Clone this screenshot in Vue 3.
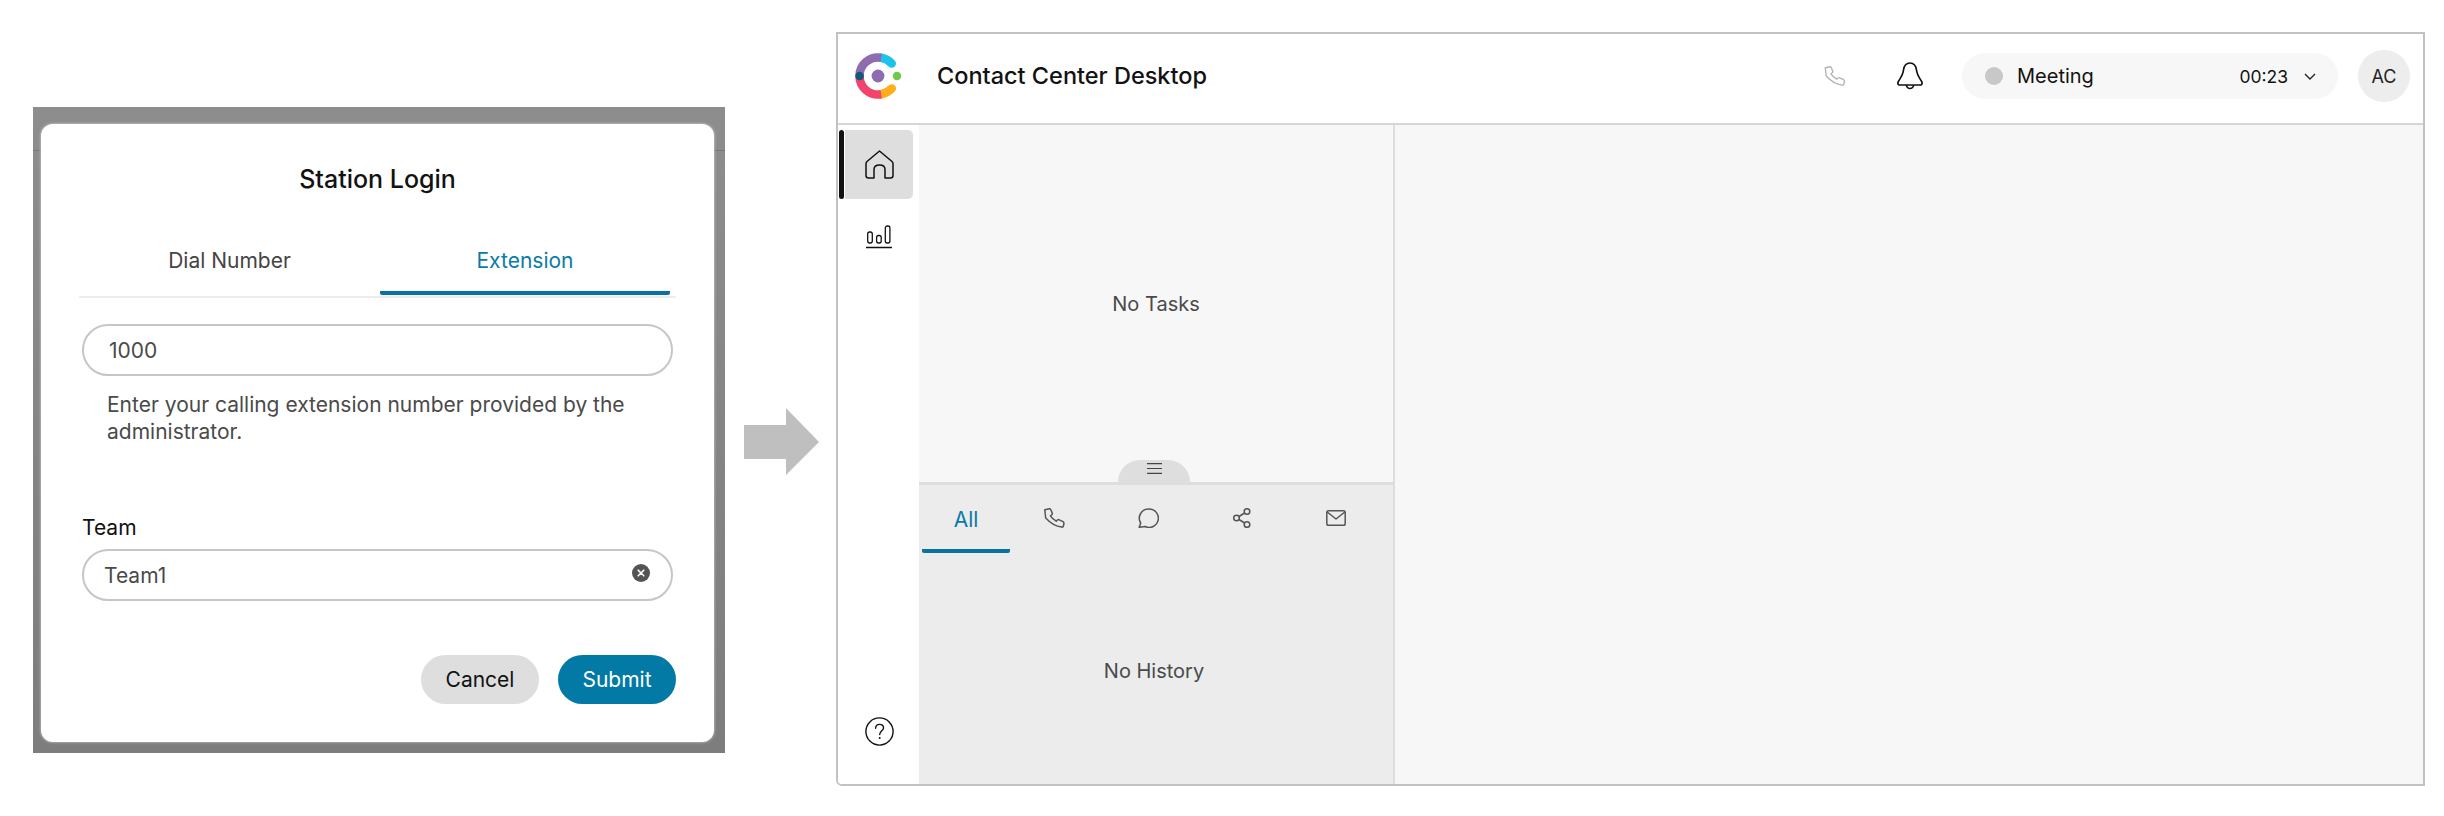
<template>
  <div class="page">
    <section class="backdrop">
      <div class="modal">
        <h2 class="modal-title">Station Login</h2>
        <div class="login-tabs">
          <div class="login-tab">Dial Number</div>
          <div class="login-tab active">Extension</div>
        </div>
        <input class="pill-input ext-input" value="1000" readonly />
        <p class="help">Enter your calling extension number provided by the administrator.</p>
        <label class="team-label">Team</label>
        <div class="team-field">
          <input class="pill-input team-input" value="Team1" readonly />
          <svg class="clear" width="18" height="18" viewBox="0 0 18 18">
            <circle cx="9" cy="9" r="9" fill="#545454" />
            <path d="M6.2 6.2l5.6 5.6M11.8 6.2l-5.6 5.6" stroke="#fff" stroke-width="1.6" stroke-linecap="round" />
          </svg>
        </div>
        <div class="actions">
          <button class="btn btn-cancel">Cancel</button>
          <button class="btn btn-submit">Submit</button>
        </div>
      </div>
    </section>

    <svg class="arrow" width="75" height="67" viewBox="0 0 75 67">
      <path d="M0 17H42V0L75 34 42 67V51H0Z" fill="#bfbfbf" />
    </svg>

    <section class="desktop">
      <header class="topbar">
        <svg class="logo" width="47" height="47" viewBox="0 0 47 47" fill="none">
          <path d="M26.2 4.8A18.5 18.5 0 0 1 36.75 10.6" stroke="#1cc3ec" stroke-width="8.5" stroke-linecap="round" />
          <path d="M36.75 35.4A18.5 18.5 0 0 1 26.2 41.2" stroke="#fdae18" stroke-width="8.5" stroke-linecap="round" />
          <path d="M4.5 23A18.5 18.5 0 0 1 26.2 4.8" stroke="#8e6cb0" stroke-width="8.5" />
          <path d="M4.5 23A18.5 18.5 0 0 0 26.2 41.2" stroke="#f0446f" stroke-width="8.5" />
          <circle cx="4.6" cy="23" r="4.3" fill="#0f5a7d" />
          <circle cx="23" cy="23" r="6.4" fill="#8e6cb0" />
          <circle cx="42" cy="23" r="4.2" fill="#72c84a" />
        </svg>
        <h1 class="app-title">Contact Center Desktop</h1>
        <svg class="top-phone" width="22" height="20" viewBox="0 0 21 20" fill="none" stroke="#b4b4b4" stroke-width="1.4">
          <path :d="phonePath" />
        </svg>
        <svg class="bell" width="26" height="28" viewBox="0 0 26 28" fill="none" stroke="#111" stroke-width="1.7">
          <path d="M13 1C8.5 1 7 4.5 6.5 8 6 13 3.5 16 1.3 19.5 .5 21.5 1 23 2.5 23H23.5C25 23 25.5 21.5 24.7 19.5 22.5 16 20 13 19.5 8 19 4.5 17.5 1 13 1Z" />
          <path d="M9.5 23a3.5 3.5 0 0 0 7 0" />
        </svg>
        <div class="status">
          <span class="status-dot"></span>
          <span class="status-name">Meeting</span>
          <span class="status-time">00:23</span>
          <svg width="14" height="9" viewBox="0 0 14 9" fill="none" stroke="#222" stroke-width="1.4">
            <path d="M2 2l5 5 5-5" />
          </svg>
        </div>
        <div class="avatar">AC</div>
      </header>

      <div class="workspace">
        <nav class="rail">
          <div class="rail-item active">
            <span class="rail-bar"></span>
            <span class="rail-cell">
              <svg width="29" height="29" viewBox="0 0 29 29" fill="none" stroke="#111" stroke-width="1.5" stroke-linejoin="round">
                <path d="M14.5 1L27 11.5Q28 12.4 28 13.8V25.5Q28 28 25.5 28H20V19.5Q20 15 14.5 15 9 15 9 19.5V28H3.5Q1 28 1 25.5V13.8Q1 12.4 2 11.5Z" />
              </svg>
            </span>
          </div>
          <div class="rail-item chart">
            <svg width="26" height="24" viewBox="0 0 26 24" fill="none" stroke="#111" stroke-width="1.3">
              <rect x="1.7" y="7" width="4.6" height="11" rx="2" />
              <rect x="10.6" y="10.5" width="4.6" height="7.5" rx="2" />
              <rect x="19.3" y="1" width="4.6" height="17" rx="2" />
              <path d="M0 22.5H26" />
            </svg>
          </div>
          <div class="rail-help">
            <svg width="29" height="29" viewBox="0 0 29 29" fill="none" stroke="#111" stroke-width="1.4">
              <circle cx="14.5" cy="14.5" r="13.6" />
              <path d="M10.6 11.3C10.7 8.8 12.4 7.4 14.6 7.4 16.9 7.4 18.5 8.9 18.5 10.9 18.5 13.8 14.7 14 14.7 17.6" stroke-linecap="round" />
              <circle cx="14.7" cy="21" r="1" fill="#111" stroke="none" />
            </svg>
          </div>
        </nav>

        <aside class="side">
          <div class="tasks">
            No Tasks
            <div class="handle">
              <svg width="15" height="11" viewBox="0 0 15 11" stroke="#444" stroke-width="1.2">
                <path d="M0 .6H15M0 5.5H15M0 10.4H15" />
              </svg>
            </div>
          </div>
          <div class="history">
            <div class="history-tabs">
              <div class="history-tab active">All</div>
              <div class="history-tab">
                <svg width="21" height="20" viewBox="0 0 21 20" fill="none" stroke="#555" stroke-width="1.5">
                  <path :d="phonePath" />
                </svg>
              </div>
              <div class="history-tab">
                <svg width="21" height="20" viewBox="0 0 21 20" fill="none" stroke="#555" stroke-width="1.5" stroke-linejoin="round">
                  <path d="M11 1A9.2 9.2 0 1 1 7.2 18.5L1.2 19.3 2.7 15A9.2 9.2 0 0 1 11 1Z" />
                </svg>
              </div>
              <div class="history-tab">
                <svg width="18" height="20" viewBox="0 0 18 20" fill="none" stroke="#555" stroke-width="1.5">
                  <circle cx="14" cy="3.5" r="2.8" />
                  <circle cx="3.5" cy="10" r="2.8" />
                  <circle cx="14" cy="16.5" r="2.8" />
                  <path d="M6 8.5l5.6-3.5M6 11.5l5.6 3.5" />
                </svg>
              </div>
              <div class="history-tab">
                <svg width="20" height="16" viewBox="0 0 20 16" fill="none" stroke="#555" stroke-width="1.5" stroke-linejoin="round">
                  <rect x=".8" y=".8" width="18.4" height="14.4" rx="1.8" />
                  <path d="M1.2 2l8.800 7 8.800-7" />
                </svg>
              </div>
            </div>
            <div class="no-history">No History</div>
          </div>
        </aside>

        <main class="content"></main>
      </div>
    </section>
  </div>
</template>

<script setup>
const phonePath = 'M3 1.2L5.2 .8Q6.3 .7 6.8 1.8L8.2 5Q8.6 6 7.7 6.8L6.5 7.8Q8.5 11 12.2 13.2L13.4 12Q14.2 11.3 15.2 11.8L19 13.6Q20.2 14.3 19.9 15.7L19.4 18Q19.1 19.3 17.6 19.1 9 18 1.7 10 .9 3.4 .8 1.8 3 1.2 3 1.2Z'
</script>

<style scoped>
.page {
  display: flex;
  align-items: flex-start;
  width: 2444px;
  height: 816px;
  background: #fff;
  font-family: Inter, "Liberation Sans", sans-serif;
  overflow: hidden;
}

/* left: login dialog */
.backdrop {
  box-sizing: border-box;
  width: 692px;
  height: 646px;
  margin: 107px 0 0 33px;
  padding: 17px 11px 11px 8px;
  background:
    linear-gradient(transparent 43px, #787878 43px, #787878 44px, transparent 44px),
    linear-gradient(#8d8d8d, #7d7d7d);
}
.modal {
  box-sizing: border-box;
  height: 618px;
  padding: 0 38px;
  background: #fff;
  border-radius: 12px;
  box-shadow: 0 0 3px rgba(255, 255, 255, 0.7);
}
.modal-title {
  margin: 0;
  padding-top: 40px;
  font-size: 25px;
  line-height: 30px;
  font-weight: 500;
  color: #121212;
  text-align: center;
}
.login-tabs {
  display: grid;
  grid-template-columns: 301px 290px;
  margin-top: 38px;
  height: 66px;
  border-bottom: 2px solid #ededed;
  box-sizing: border-box;
  width: 597px;
}
.login-tab {
  padding-top: 16px;
  font-size: 21px;
  line-height: 26px;
  color: #444;
  text-align: center;
}
.login-tab.active {
  color: #0a7ba8;
  border-bottom: 4px solid #0a72a0;
  border-radius: 2px;
  height: 63px;
  box-sizing: border-box;
}
.pill-input {
  display: block;
  box-sizing: border-box;
  height: 52px;
  border: 2px solid #c6c6c6;
  border-radius: 26px;
  background: #fff;
  font-family: inherit;
  font-size: 21px;
  color: #4a4a4a;
  outline: none;
}
.ext-input {
  width: 591px;
  margin: 26px 0 0 3px;
  padding: 0 25px;
}
.help {
  margin: 15px 0 0 28px;
  width: 540px;
  font-size: 21px;
  line-height: 27px;
  color: #4a4a4a;
}
.team-label {
  display: block;
  margin: 70px 0 0 3px;
  font-size: 21px;
  line-height: 26px;
  color: #121212;
}
.team-field {
  position: relative;
  margin: 8px 0 0 3px;
  width: 591px;
}
.team-input {
  width: 100%;
  padding: 0 20px;
}
.clear {
  position: absolute;
  top: 15px;
  right: 23px;
}
.actions {
  display: flex;
  justify-content: flex-end;
  gap: 19px;
  margin: 54px 0 0;
}
.btn {
  width: 118px;
  height: 49px;
  border: 0;
  border-radius: 25px;
  font-family: inherit;
  font-size: 21px;
  padding: 0;
}
.btn-cancel { background: #dedede; color: #121212; }
.btn-submit { background: #027aa5; color: #fff; }

.arrow {
  flex-shrink: 0;
  margin: 408px 0 0 19px;
}

/* right: desktop */
.desktop {
  box-sizing: border-box;
  display: flex;
  flex-direction: column;
  flex-shrink: 0;
  width: 1589px;
  height: 754px;
  margin: 32px 0 0 17px;
  border: 2px solid #c2c2c2;
  border-radius: 0 0 0 6px;
  overflow: hidden;
}
.topbar {
  box-sizing: border-box;
  display: flex;
  align-items: center;
  height: 91px;
  padding: 0 13px 5px 17px;
  background: #fff;
  border-bottom: 2px solid #d6d6d6;
}
.logo { flex-shrink: 0; }
.app-title {
  margin: 0 0 2px 35px;
  font-size: 23.5px;
  font-weight: 500;
  color: #121212;
}
.top-phone { margin-left: auto; }
.bell { margin-left: 51px; }
.status {
  box-sizing: border-box;
  display: flex;
  align-items: center;
  width: 376px;
  height: 46px;
  margin-left: 39px;
  padding: 0 21px 0 23px;
  background: #f7f7f7;
  border-radius: 23px;
}
.status-dot {
  width: 18px;
  height: 18px;
  border-radius: 50%;
  background: #c8c8c8;
}
.status-name {
  margin-left: 14px;
  font-size: 20px;
  color: #121212;
}
.status-time {
  margin-left: auto;
  margin-right: 15px;
  font-size: 17.5px;
  color: #121212;
}
.avatar {
  display: flex;
  align-items: center;
  justify-content: center;
  width: 52px;
  height: 52px;
  margin-left: 20px;
  border-radius: 50%;
  background: #ededed;
  font-size: 18px;
  color: #222;
}
.workspace {
  display: flex;
  flex: 1;
  min-height: 0;
}
.rail {
  box-sizing: border-box;
  display: flex;
  flex-direction: column;
  width: 81px;
  padding: 5px 0 38px 1px;
  background: #fff;
}
.rail-item {
  display: flex;
  height: 69px;
}
.rail-bar {
  width: 5px;
  border-radius: 3px;
  background: #111;
}
.rail-cell {
  display: flex;
  align-items: center;
  justify-content: center;
  width: 68px;
  margin-left: 1px;
  background: #dedede;
  border-radius: 0 5px 5px 0;
}
.rail-item.chart {
  align-items: center;
  justify-content: center;
  width: 74px;
  padding-left: 5px;
  box-sizing: border-box;
  margin-top: 3px;
}
.rail-help {
  display: flex;
  justify-content: center;
  width: 78px;
  margin-top: auto;
  padding-left: 2px;
  box-sizing: border-box;
}
.side {
  display: flex;
  flex-direction: column;
  flex-shrink: 0;
  width: 476px;
  border-right: 2px solid #dedede;
  box-sizing: border-box;
  font-size: 20px;
  color: #4a4a4a;
}
.tasks {
  position: relative;
  display: flex;
  align-items: center;
  justify-content: center;
  height: 357px;
  background: #f7f7f7;
  border-bottom: 3px solid #dedede;
  box-sizing: content-box;
}
.handle {
  position: absolute;
  left: 199px;
  bottom: 0;
  width: 72px;
  height: 22px;
  padding-top: 3px;
  box-sizing: border-box;
  display: flex;
  justify-content: center;
  align-items: flex-start;
  background: #dedede;
  border-radius: 24px 24px 0 0;
}
.history {
  display: flex;
  flex: 1;
  flex-direction: column;
  background: #ececec;
}
.history-tabs {
  display: flex;
  gap: 6px;
  height: 68px;
  padding-left: 3px;
}
.history-tab {
  box-sizing: border-box;
  display: flex;
  align-items: center;
  justify-content: center;
  width: 88px;
  padding-bottom: 2px;
}
.history-tab.active {
  margin-right: -6px;
  padding: 4px 0 0;
  color: #0a7ba8;
  font-size: 21px;
  border-bottom: 4px solid #0a72a0;
  border-radius: 2px;
}
.no-history {
  flex: 1;
  display: flex;
  align-items: center;
  justify-content: center;
  padding: 5px 4px 0 0;
}
.content {
  flex: 1;
  background: #f7f7f7;
}
</style>
